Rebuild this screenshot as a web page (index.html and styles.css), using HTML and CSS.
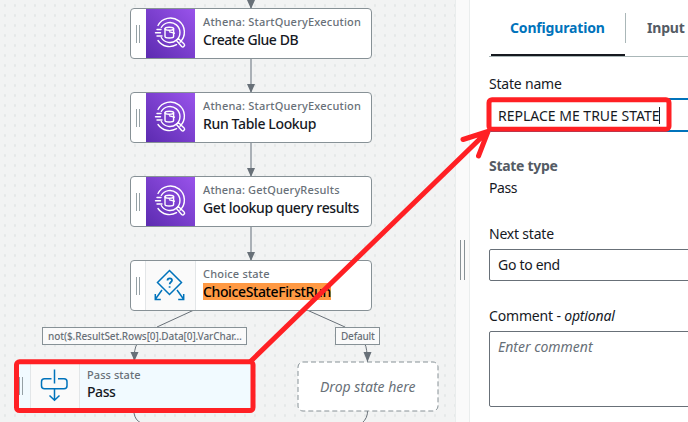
FILE: index.html
```html
<!DOCTYPE html>
<html lang="en">
<head>
<meta charset="utf-8">
<title>Workflow Studio</title>
<link rel="stylesheet" href="styles.css">
</head>
<body>
<svg class="defs" width="0" height="0">
  <defs>
    <symbol id="athena" viewBox="0 0 48 48">
      <g fill="none" stroke="#fff" stroke-width="1.4" stroke-linecap="round">
        <path d="M12 16.5A14 14 0 1 1 34 33.200M12 31.500A14 14 0 0 0 30.500 35.700"/>
        <path d="M15.300 18.500A10 10 0 1 1 15.300 28.500"/>
        <path d="M11 20.500h4M9.500 23.700h5M11 27h5"/>
        <path d="M19 19.800v7.700c0 2 8.600 2 8.600 0v-7.700"/>
        <ellipse cx="23.300" cy="19.700" rx="4.300" ry="1.500"/>
        <path d="M23.500 22.800l4.800 1.400"/>
        <path d="M30.500 31.500l1.800-2 5.800 5.400c1.500 1.700-.8 4-2.500 2.500z"/>
      </g>
    </symbol>
  </defs>
</svg>
<div class="studio">
  <main class="canvas">
    <svg class="edges" width="455" height="422">
      <g class="straight"><path d="M251 0V9M251 58V92M251 142V176M251 226V260"/></g>
      <g class="curve"><path d="M194 310L157 327M137 344Q134 349 134 360M307 310L345 327M365 344Q367 348 367.500 362M134 413Q135 420 141 423M367.500 410Q368 418 362 423"/></g>
      <g class="heads"><path d="M247 0h8l-4 9zM247 84h8l-4 9zM247 168h8l-4 9zM247 252h8l-4 9zM130.500 352h8l-4 9zM363.500 352h8l-4 10z"/></g>
    </svg>
    <div class="node n1"><i class="grip"></i><svg class="pic athena"><use href="#athena" width="48" height="48"/></svg><div class="label"><small><span class="type-a">Athena: StartQueryExecution</span></small><b><span class="name-a">Create Glue DB</span></b></div></div>
    <div class="node n2"><i class="grip"></i><svg class="pic athena"><use href="#athena" width="48" height="48"/></svg><div class="label"><small><span class="type-a">Athena: StartQueryExecution</span></small><b><span class="name-b">Run Table Lookup</span></b></div></div>
    <div class="node n3"><i class="grip"></i><svg class="pic athena"><use href="#athena" width="48" height="48"/></svg><div class="label"><small><span class="type-b">Athena: GetQueryResults</span></small><b><span class="name-c">Get lookup query results</span></b></div></div>
    <div class="node n4"><i class="grip"></i>
      <svg class="pic flow" viewBox="0 0 49 49"><path d="M23.500 9.500L35.500 21.500 23.500 33.500 11.500 21.500zM16 29L9.500 38M9.300 33v5.500h5.500M31 29L37.500 38M37.700 33v5.500h-5.500"/><path class="ask" d="M21.500 19.500c0-3 4.500-2.800 4.500-.2 0 1.700-2.300 1.700-2.300 3.900M23.600 25.200v1.600"/></svg>
      <div class="label"><small><span class="type-c">Choice state</span></small><b><span class="name-d">ChoiceStateFirstRun</span></b></div></div>
    <div class="tag t1"><span class="tag-a">not($.ResultSet.Rows[0].Data[0].VarChar…</span></div>
    <div class="tag t2"><span class="tag-b">Default</span></div>
    <div class="node pass"><i class="grip"></i>
      <svg class="pic flow" viewBox="0 0 48 48"><path d="M23.500 7.500v14M20.500 16.800h-7q-3 0-3 3v3.900q0 3 3 3h19.500q3 0 3-3v-3.900q0-3-3-3h-6M23.500 26.700V38M18.500 33.500l5 4.800 5-4.800"/></svg>
      <div class="label"><small><span class="type-d">Pass state</span></small><b><span class="name-e">Pass</span></b></div></div>
    <div class="drop"><svg width="142" height="51"><rect x="1" y="1" width="140" height="49" rx="5"/></svg><span class="drop-text">Drop state here</span></div>
  </main>
  <div class="splitter"><i></i></div>
  <aside class="panel">
    <nav class="tabs"><div class="tab active"><span class="tab-a">Configuration</span></div><div class="tab second"><span class="tab-c">Input</span></div></nav>
    <section class="field name"><label><span class="l-name">State name</span></label><div class="input focus"><span class="v-name">REPLACE ME TRUE STATE</span><i class="caret"></i></div></section>
    <section class="field type"><label class="strong"><span class="l-type">State type</span></label><p><span class="v-pass">Pass</span></p></section>
    <section class="field next"><label><span class="l-next">Next state</span></label><div class="input"><span class="v-next">Go to end</span></div></section>
    <section class="field comment"><label><span class="l-com">Comment - <em>optional</em></span></label><div class="input area"><span class="v-com">Enter comment</span></div></section>
  </aside>
</div>
<svg class="marks" width="688" height="422">
  <rect x="16.500" y="361.800" width="236.500" height="48.800" rx="3"/>
  <rect x="489" y="99.700" width="180" height="29.500" rx="3"/>
  <path d="M251 361L487 132M463 139.500L488 131.500 478.500 156"/>
</svg>
</body>
</html>
```
FILE: styles.css
```css
* { box-sizing: border-box; }
body { margin: 0; overflow: hidden; font: 14px/20px "Noto Sans", "Open Sans", sans-serif; color: #16191f; background: #fff; }
.defs { position: absolute; }
span { display: inline-block; white-space: nowrap; }
.type-a { letter-spacing: .2px; }
.type-b, .type-c { letter-spacing: .18px; }
.type-d { letter-spacing: .07px; }
.name-a, .name-e, .v-pass { letter-spacing: -.45px; }
.name-b { letter-spacing: -.36px; }
.name-c { letter-spacing: -.36px; }
.name-d { letter-spacing: -.38px; }
.tag-a { letter-spacing: -.09px; }
.tag-b, .l-name, .l-next, .tab-c { letter-spacing: -.2px; }
.l-type, .v-next { letter-spacing: -.3px; }
.tab-a, .l-com { letter-spacing: -.17px; }
.studio { display: flex; width: 688px; height: 422px; }
.canvas { position: relative; flex: 0 0 455px; overflow: hidden; background: #f2f3f3 radial-gradient(circle at 5px 5.500px, #e5e8e8 1px, transparent 1.500px) 0 0 / 10px 10px; }
.edges { position: absolute; left: 0; top: 0; fill: none; }
.straight { stroke: #aab0b6; stroke-width: 2; }
.curve { stroke: #687078; stroke-width: 1; }
.heads { fill: #687078; }
.node { position: absolute; left: 130px; width: 242px; height: 51px; display: flex; align-items: stretch; background: #fff; border: 1px solid #879196; border-radius: 4px; }
.n1 { top: 8px; } .n2 { top: 92px; } .n3 { top: 176px; } .n4 { top: 260px; }
.grip { flex: 0 0 4px; height: 18px; margin: 16px 7px 0 4px; border: solid #95a0a5; border-width: 0 1px; }
.n1 .grip, .n2 .grip, .n3 .grip, .n4 .grip { margin-right: 6px; }
.n1, .n2, .n3, .n4 { padding-left: 1px; }
.pic { flex: 0 0 49px; width: 49px; height: 49px; }
.athena { background: linear-gradient(45deg, #5c2bb0, #9953eb); }
.flow { background: #fafafa; box-shadow: -1px 0 #e3e6e8, 1px 0 #e3e6e8; fill: none; stroke: #0073bb; stroke-width: 1.500; }
.flow .ask { stroke-width: 1.800; }
.label { margin-left: 8px; padding-top: 4px; }
.label small, .label b { display: block; height: 18px; line-height: 18px; font-weight: 400; }
.label small { font-size: 11px; color: #687078; font-weight: 500; }
.label b { font-size: 14px; font-weight: 500; }
.n4 .label b span { background: #ff9943; height: 17px; line-height: 17px; color: #000; }
.pass { left: 15px; top: 361px; width: 240px; height: 50px; background: #f1faff; border: 0; }
.pass .grip { margin: 16px 8px 0 4px; }
.pass .pic { flex-basis: 48px; width: 48px; height: 50px; }
.pass .label { padding-top: 5px; }
.pass .label b { margin-top: -1px; }
.tag { position: absolute; top: 327px; height: 18px; padding-left: 5px; font-size: 10px; line-height: 16px; color: #687078; background: #fafafa; border: 1px solid #879196; font-weight: 500; }
.t1 { left: 42px; width: 205px; } .t2 { left: 335px; width: 45px; }
.drop { position: absolute; left: 297px; top: 361px; width: 142px; height: 51px; padding: 16px 0 0 23px; color: #687078; font-style: italic; }
.drop svg { position: absolute; left: 0; top: 0; fill: #fff; stroke: #879196; stroke-dasharray: 5 3; }
.drop span { position: relative; }
.splitter { flex: 0 0 15px; background: #fafafa; border: solid #eaeded; border-width: 0 1px; display: flex; align-items: flex-start; padding: 240px 0 0 4px; }
.splitter i { width: 5px; height: 40px; border: solid #879196; border-width: 0 1px; }
.panel { flex: 1; padding-left: 19px; overflow: hidden; }
.tabs { display: flex; height: 57px; border-bottom: 1px solid #aab7b8; font-weight: 700; }
.tab { padding-top: 18px; }
.active { width: 134px; margin-left: 2px; padding-left: 19px; color: #0073bb; border-bottom: 2px solid #16191f; }
.second { height: 30px; margin-top: 13px; padding: 5px 0 0 21px; border-left: 1px solid #aab7b8; color: #545b64; }
.field label, .field p { display: block; height: 20px; margin: 0; }
.name { padding-top: 17px; }
.input { width: 260px; height: 32px; margin-top: 5px; padding: 5px 8px; border: 1px solid #687078; border-radius: 2px; display: flex; align-items: flex-start; }
.focus { height: 34px; margin-top: 4px; padding: 6px 7px 0; border: 2px solid #0073bb; }
.caret { flex: 0 0 1px; height: 17px; margin: 1px 0 0 -1px; background: #16191f; }
.type { padding-top: 24px; }
.strong { font-weight: 700; color: #545b64; }
.type p { padding-top: 2px; height: 22px; }
.next { padding-top: 26px; }
.comment { padding-top: 25px; }
.area { height: 76px; color: #687078; font-style: italic; }
.marks { position: absolute; left: 0; top: 0; fill: none; stroke: #ff2024; stroke-width: 5; stroke-linecap: round; stroke-linejoin: round; }
```
